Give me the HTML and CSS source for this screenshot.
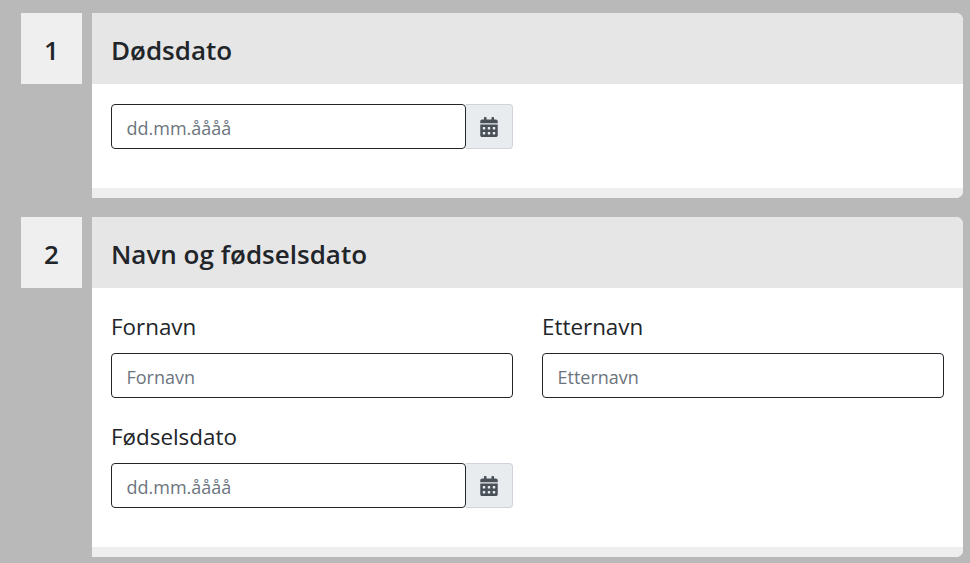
FILE: index.html
```html
<!DOCTYPE html>
<html lang="nb">
<head>
    <meta charset="UTF-8" />
    <meta name="viewport" content="width=device-width, initial-scale=1" />
    <title>Dødsdato</title>
    <link rel="stylesheet" href="styles.css">
</head>
<body>

    <section class="step step-first">
        <div class="step-number">1</div>
        <div class="card">
            <h2 class="card-header">Dødsdato</h2>
            <div class="card-body">
                <div class="form-row">
                    <div class="field">
                        <div class="input-group">
                            <input class="form-control" type="text" placeholder="dd.mm.åååå">
                            <span class="input-addon">
                                <svg class="icon" viewBox="0 0 448 512"><path fill="currentColor" d="M0 464c0 26.5 21.5 48 48 48h352c26.500 0 48-21.500 48-48V192H0v272zm320-196c0-6.600 5.400-12 12-12h40c6.600 0 12 5.400 12 12v40c0 6.600-5.400 12-12 12h-40c-6.600 0-12-5.400-12-12v-40zm0 128c0-6.600 5.400-12 12-12h40c6.600 0 12 5.400 12 12v40c0 6.600-5.400 12-12 12h-40c-6.600 0-12-5.400-12-12v-40zM192 268c0-6.600 5.400-12 12-12h40c6.600 0 12 5.400 12 12v40c0 6.600-5.400 12-12 12h-40c-6.600 0-12-5.400-12-12v-40zm0 128c0-6.600 5.400-12 12-12h40c6.600 0 12 5.400 12 12v40c0 6.600-5.400 12-12 12h-40c-6.600 0-12-5.400-12-12v-40zM64 268c0-6.600 5.400-12 12-12h40c6.600 0 12 5.400 12 12v40c0 6.600-5.400 12-12 12H76c-6.600 0-12-5.400-12-12v-40zm0 128c0-6.600 5.400-12 12-12h40c6.600 0 12 5.400 12 12v40c0 6.600-5.400 12-12 12H76c-6.600 0-12-5.400-12-12v-40zM400 64h-48V16c0-8.800-7.200-16-16-16h-32c-8.800 0-16 7.200-16 16v48H160V16c0-8.800-7.200-16-16-16h-32c-8.800 0-16 7.200-16 16v48H48C21.500 64 0 85.500 0 112v48h448v-48c0-26.500-21.500-48-48-48z"/></svg>
                            </span>
                        </div>
                    </div>
                </div>
            </div>
            <div class="card-footer"></div>
        </div>
    </section>

    <section class="step">
        <div class="step-number">2</div>
        <div class="card">
            <h2 class="card-header">Navn og fødselsdato</h2>
            <div class="card-body card-body-labels">
                <div class="form-row">
                    <div class="field">
                        <label class="field-label">Fornavn</label>
                        <input class="form-control" type="text" placeholder="Fornavn">
                    </div>
                    <div class="field">
                        <label class="field-label">Etternavn</label>
                        <input class="form-control" type="text" placeholder="Etternavn">
                    </div>
                </div>
                <div class="form-row">
                    <div class="field">
                        <label class="field-label">Fødselsdato</label>
                        <div class="input-group">
                            <input class="form-control" type="text" placeholder="dd.mm.åååå">
                            <span class="input-addon">
                                <svg class="icon" viewBox="0 0 448 512"><path fill="currentColor" d="M0 464c0 26.5 21.5 48 48 48h352c26.500 0 48-21.500 48-48V192H0v272zm320-196c0-6.600 5.400-12 12-12h40c6.600 0 12 5.400 12 12v40c0 6.600-5.400 12-12 12h-40c-6.600 0-12-5.400-12-12v-40zm0 128c0-6.600 5.400-12 12-12h40c6.600 0 12 5.400 12 12v40c0 6.600-5.400 12-12 12h-40c-6.600 0-12-5.400-12-12v-40zM192 268c0-6.600 5.400-12 12-12h40c6.600 0 12 5.400 12 12v40c0 6.600-5.400 12-12 12h-40c-6.600 0-12-5.400-12-12v-40zm0 128c0-6.600 5.400-12 12-12h40c6.600 0 12 5.400 12 12v40c0 6.600-5.400 12-12 12h-40c-6.600 0-12-5.400-12-12v-40zM64 268c0-6.600 5.400-12 12-12h40c6.600 0 12 5.400 12 12v40c0 6.600-5.400 12-12 12H76c-6.600 0-12-5.400-12-12v-40zm0 128c0-6.600 5.400-12 12-12h40c6.600 0 12 5.400 12 12v40c0 6.600-5.400 12-12 12H76c-6.600 0-12-5.400-12-12v-40zM400 64h-48V16c0-8.800-7.200-16-16-16h-32c-8.800 0-16 7.200-16 16v48H160V16c0-8.800-7.200-16-16-16h-32c-8.800 0-16 7.200-16 16v48H48C21.500 64 0 85.500 0 112v48h448v-48c0-26.500-21.500-48-48-48z"/></svg>
                            </span>
                        </div>
                    </div>
                </div>
            </div>
            <div class="card-footer"></div>
        </div>
    </section>

</body>
</html>
```

FILE: styles.css
```css
body {
    font-family: "Open Sans", "Noto Sans", sans-serif;
    background: #b9b9b9;
    margin: 0;
    padding: 13px 7px 0 21px;
    color: #212529;
    overflow: hidden;
}
.step {
    display: flex;
    align-items: flex-start;
    gap: 10px;
    margin-bottom: 19px;
}
.step-number {
    flex: 0 0 61px;
    height: 71px;
    line-height: 75px;
    text-align: center;
    font-size: 26px;
    font-weight: 600;
    background: #efefef;
}
.card {
    flex: 1;
    background: #fff;
    border-radius: 0 7px 7px 0;
    overflow: hidden;
}
.card-header {
    margin: 0;
    height: 71px;
    line-height: 74px;
    padding: 0 19px;
    font-size: 26px;
    font-weight: 600;
    background: #e6e6e6;
}
.card-body {
    padding: 20px 19px 39px;
}
.card-body-labels {
    padding-top: 24px;
    padding-bottom: 39px;
}
.card-footer {
    height: 10px;
    background: #eeeeee;
}
.form-row {
    display: grid;
    grid-template-columns: 402px 402px;
    column-gap: 29px;
    margin-bottom: 24px;
}
.form-row:last-child {
    margin-bottom: 0;
}
.field-label {
    display: block;
    font-size: 22.4px;
    line-height: 30px;
    margin-bottom: 11px;
}
.input-group {
    display: flex;
}
.form-control {
    flex: 1;
    display: block;
    box-sizing: border-box;
    width: 100%;
    min-width: 0;
    height: 45px;
    padding: 2px 15px 0 14.500px;
    font-family: inherit;
    font-size: 18px;
    color: #212529;
    background: #fff;
    border: 1px solid #212529;
    border-radius: 4px;
    outline: none;
}
.form-control::placeholder {
    color: #6c757d;
    opacity: 1;
}
.input-addon {
    flex: 0 0 47px;
    box-sizing: border-box;
    display: flex;
    align-items: center;
    justify-content: center;
    color: #495057;
    background: #e9ecef;
    border: 1px solid #ced4da;
    border-left: 0;
    border-radius: 0 4px 4px 0;
}
.icon {
    width: 18px;
    height: 20px;
}
```
